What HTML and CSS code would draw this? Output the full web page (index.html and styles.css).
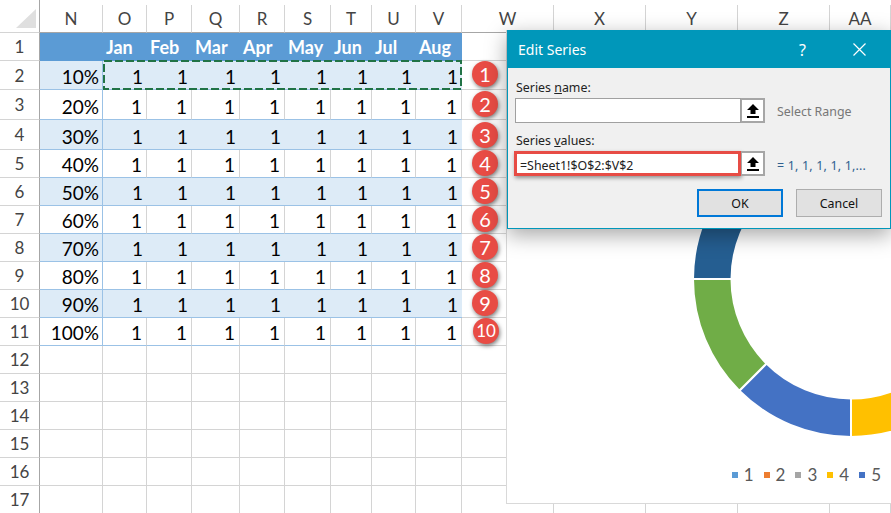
FILE: index.html
```html
<!DOCTYPE html>
<html lang="en">
<head>
    <meta charset="UTF-8">
    <title>Edit Series</title>
    <link rel="stylesheet" href="styles.css">
</head>
<body>

    <div class="sheet">
        <!-- column letters -->
        <div class="corner"><svg width="40" height="32"><polygon points="16,28 36,28 36,9" fill="#dfdfdf"/></svg></div>
        <div class="col-head">N</div><div class="col-head">O</div><div class="col-head">P</div><div class="col-head">Q</div><div class="col-head">R</div><div class="col-head">S</div><div class="col-head">T</div><div class="col-head">U</div><div class="col-head">V</div><div class="col-head">W</div><div class="col-head">X</div><div class="col-head">Y</div><div class="col-head">Z</div><div class="col-head">AA</div>

        <div class="row-head">1</div>
        <div class="hdr hdr-n"></div><div class="hdr">Jan</div><div class="hdr">Feb</div><div class="hdr">Mar</div><div class="hdr">Apr</div><div class="hdr">May</div><div class="hdr">Jun</div><div class="hdr">Jul</div><div class="hdr">Aug</div>
        <div class="rest"></div>

        <div class="row-head">2</div>
        <div class="band pct">10%</div><div class="band">1</div><div class="band">1</div><div class="band">1</div><div class="band">1</div><div class="band">1</div><div class="band">1</div><div class="band">1</div><div class="band">1</div>
        <div class="rest"></div>

        <div class="row-head">3</div>
        <div class="cell pct">20%</div><div class="cell">1</div><div class="cell">1</div><div class="cell">1</div><div class="cell">1</div><div class="cell">1</div><div class="cell">1</div><div class="cell">1</div><div class="cell">1</div>
        <div class="rest"></div>

        <div class="row-head">4</div>
        <div class="band pct">30%</div><div class="band">1</div><div class="band">1</div><div class="band">1</div><div class="band">1</div><div class="band">1</div><div class="band">1</div><div class="band">1</div><div class="band">1</div>
        <div class="rest"></div>

        <div class="row-head">5</div>
        <div class="cell pct">40%</div><div class="cell">1</div><div class="cell">1</div><div class="cell">1</div><div class="cell">1</div><div class="cell">1</div><div class="cell">1</div><div class="cell">1</div><div class="cell">1</div>
        <div class="rest"></div>

        <div class="row-head">6</div>
        <div class="band pct">50%</div><div class="band">1</div><div class="band">1</div><div class="band">1</div><div class="band">1</div><div class="band">1</div><div class="band">1</div><div class="band">1</div><div class="band">1</div>
        <div class="rest"></div>

        <div class="row-head">7</div>
        <div class="cell pct">60%</div><div class="cell">1</div><div class="cell">1</div><div class="cell">1</div><div class="cell">1</div><div class="cell">1</div><div class="cell">1</div><div class="cell">1</div><div class="cell">1</div>
        <div class="rest"></div>

        <div class="row-head">8</div>
        <div class="band pct">70%</div><div class="band">1</div><div class="band">1</div><div class="band">1</div><div class="band">1</div><div class="band">1</div><div class="band">1</div><div class="band">1</div><div class="band">1</div>
        <div class="rest"></div>

        <div class="row-head">9</div>
        <div class="cell pct">80%</div><div class="cell">1</div><div class="cell">1</div><div class="cell">1</div><div class="cell">1</div><div class="cell">1</div><div class="cell">1</div><div class="cell">1</div><div class="cell">1</div>
        <div class="rest"></div>

        <div class="row-head">10</div>
        <div class="band pct">90%</div><div class="band">1</div><div class="band">1</div><div class="band">1</div><div class="band">1</div><div class="band">1</div><div class="band">1</div><div class="band">1</div><div class="band">1</div>
        <div class="rest"></div>

        <div class="row-head">11</div>
        <div class="cell pct">100%</div><div class="cell">1</div><div class="cell">1</div><div class="cell">1</div><div class="cell">1</div><div class="cell">1</div><div class="cell">1</div><div class="cell">1</div><div class="cell">1</div>
        <div class="rest"></div>

        <div class="row-head">12</div>
        <div class="empty"></div><div class="empty"></div><div class="empty"></div><div class="empty"></div><div class="empty"></div><div class="empty"></div><div class="empty"></div><div class="empty"></div><div class="empty"></div>
        <div class="rest"></div>

        <div class="row-head">13</div>
        <div class="empty"></div><div class="empty"></div><div class="empty"></div><div class="empty"></div><div class="empty"></div><div class="empty"></div><div class="empty"></div><div class="empty"></div><div class="empty"></div>
        <div class="rest"></div>

        <div class="row-head">14</div>
        <div class="empty"></div><div class="empty"></div><div class="empty"></div><div class="empty"></div><div class="empty"></div><div class="empty"></div><div class="empty"></div><div class="empty"></div><div class="empty"></div>
        <div class="rest"></div>

        <div class="row-head">15</div>
        <div class="empty"></div><div class="empty"></div><div class="empty"></div><div class="empty"></div><div class="empty"></div><div class="empty"></div><div class="empty"></div><div class="empty"></div><div class="empty"></div>
        <div class="rest"></div>

        <div class="row-head">16</div>
        <div class="empty"></div><div class="empty"></div><div class="empty"></div><div class="empty"></div><div class="empty"></div><div class="empty"></div><div class="empty"></div><div class="empty"></div><div class="empty"></div>
        <div class="rest"></div>

        <div class="row-head">17</div>
        <div class="empty"></div><div class="empty"></div><div class="empty"></div><div class="empty"></div><div class="empty"></div><div class="empty"></div><div class="empty"></div><div class="empty"></div><div class="empty"></div><div class="empty"></div><div class="empty"></div><div class="empty"></div><div class="empty"></div><div class="empty"></div>

        <!-- copied range -->
        <svg class="marching-ants" width="359" height="30"><rect x="1" y="1" width="357" height="28" fill="none" stroke="#217346" stroke-width="2" stroke-dasharray="8 3"/></svg>
    </div>

    <!-- numbered callouts beside the table -->
    <div class="badge badge-1">1</div>
    <div class="badge badge-2">2</div>
    <div class="badge badge-3">3</div>
    <div class="badge badge-4">4</div>
    <div class="badge badge-5">5</div>
    <div class="badge badge-6">6</div>
    <div class="badge badge-7">7</div>
    <div class="badge badge-8">8</div>
    <div class="badge badge-9">9</div>
    <div class="badge badge-10">10</div>

    <!-- doughnut chart, mostly under the dialog -->
    <div class="chart">
        <svg class="donut" width="384" height="434">
            <path d="M455.72 360.72 A158 158 0 0 1 344 407 L344 368.5 A119.5 119.5 0 0 0 428.5 333.5 Z" fill="#ffc000" stroke="#fff" stroke-width="2"/>
            <path d="M344 407 A158 158 0 0 1 232.28 360.72 L259.5 333.5 A119.5 119.5 0 0 0 344 368.5 Z" fill="#4472c4" stroke="#fff" stroke-width="2"/>
            <path d="M232.28 360.72 A158 158 0 0 1 186 249 L224.5 249 A119.5 119.5 0 0 0 259.5 333.5 Z" fill="#70ad47" stroke="#fff" stroke-width="2"/>
            <path d="M186 249 A158 158 0 0 1 232.28 137.28 L259.5 164.5 A119.5 119.5 0 0 0 224.5 249 Z" fill="#255e91" stroke="#fff" stroke-width="2"/>
        </svg>
        <div class="legend">
            <span class="legend-item"><i class="swatch swatch-1"></i>1</span>
            <span class="legend-item"><i class="swatch swatch-2"></i>2</span>
            <span class="legend-item"><i class="swatch swatch-3"></i>3</span>
            <span class="legend-item"><i class="swatch swatch-4"></i>4</span>
            <span class="legend-item"><i class="swatch swatch-5"></i>5</span>
        </div>
    </div>

    <div class="dialog">
        <div class="title-bar">
            <span class="title">Edit Series</span>
            <span class="help">?</span>
            <svg class="close" width="13" height="13"><path d="M0.5 0.5 L12.5 12.5 M12.5 0.5 L0.5 12.5" stroke="#fff" stroke-width="1.2" fill="none"/></svg>
        </div>
        <div class="dialog-body">
            <div class="field-label">Series <u>n</u>ame:</div>
            <div class="field-row">
                <div class="text-box"></div>
                <div class="range-btn"><svg width="12" height="14"><path d="M6 0 L12 6 L8.5 6 L8.5 10 L3.5 10 L3.5 6 L0 6 Z M0 12 H12 V14 H0 Z" fill="#000"/></svg></div>
                <span class="hint">Select Range</span>
            </div>
            <div class="field-label label-values">Series <u>v</u>alues:</div>
            <div class="field-row">
                <div class="text-box text-box-active">=Sheet1!$O$2:$V$2</div>
                <div class="range-btn"><svg width="12" height="14"><path d="M6 0 L12 6 L8.5 6 L8.5 10 L3.5 10 L3.5 6 L0 6 Z M0 12 H12 V14 H0 Z" fill="#000"/></svg></div>
                <span class="preview">= 1, 1, 1, 1, 1,...</span>
            </div>
            <div class="actions">
                <button class="btn btn-default">OK</button>
                <button class="btn">Cancel</button>
            </div>
        </div>
    </div>

</body>
</html>
```

FILE: styles.css
```css
html, body {
    margin: 0;
    height: 513px;
    overflow: hidden;
    background-color: white;
}

body {
    position: relative;
    font-family: Lato, "Liberation Sans", sans-serif;
}

.sheet {
    position: relative;
    display: grid;
    grid-template-columns: 40px 63px 44px 45px 48px 45px 46px 41px 44px 46px 92px 92px 92px 92px 61px;
    grid-template-rows: 33px 28px 29px 30px 30px repeat(13, 28px);
    height: 513px;
    overflow: hidden;
    font-size: 19px;
    color: #000;
}

.corner {
    border-bottom: 1px solid #d4d4d4;
    border-right: 1px solid #a6a6a6;
    box-sizing: border-box;
}

.col-head {
    margin-top: 5px;
    border-right: 1px solid #d4d4d4;
    border-bottom: 1px solid #a6a6a6;
    color: #444;
    font-size: 17px;
    display: flex;
    align-items: center;
    justify-content: center;
}

.row-head {
    border-right: 1px solid #a6a6a6;
    border-bottom: 1px solid #d4d4d4;
    color: #444;
    font-size: 17px;
    display: flex;
    align-items: center;
    justify-content: center;
}

.hdr {
    background-color: #5b9bd5;
    color: white;
    font-weight: bold;
    font-size: 18px;
    padding-left: 3px;
    display: flex;
    align-items: center;
    white-space: nowrap;
    overflow: hidden;
}

.cell, .band {
    display: flex;
    align-items: flex-end;
    justify-content: flex-end;
    padding: 0 4px 1px 0;
    border-bottom: 1px solid #9bc2e6;
}

.cell {
    border-right: 1px solid #d4d4d4;
}

.band {
    background-color: #ddebf7;
}

.band.pct, .cell.pct {
    border-right: 1px solid #9bc2e6;
    padding-right: 3px;
}

.rest {
    grid-column: span 5;
    border-bottom: 1px solid #d4d4d4;
}

.empty {
    border-right: 1px solid #d4d4d4;
    border-bottom: 1px solid #d4d4d4;
}

.marching-ants {
    position: absolute;
    grid-column: 3 / 11;
    grid-row: 3 / 4;
    top: -1px;
    left: 0;
}

/* callouts */
.badge {
    position: absolute;
    left: 472px;
    width: 26px;
    height: 26px;
    border-radius: 50%;
    background-color: #e84c45;
    color: white;
    font-size: 20px;
    line-height: 26px;
    text-align: center;
    box-shadow: 1px 2px 4px rgba(0, 0, 0, 0.5);
}

.badge-1 { top: 61px; }
.badge-2 { top: 91px; }
.badge-3 { top: 122px; }
.badge-4 { top: 150px; }
.badge-5 { top: 178px; }
.badge-6 { top: 206px; }
.badge-7 { top: 234px; }
.badge-8 { top: 262px; }
.badge-9 { top: 290px; }
.badge-10 { top: 318px; left: 473px; font-size: 17px; }

/* chart */
.chart {
    position: absolute;
    left: 506px;
    top: 30px;
    width: 385px;
    height: 474px;
    box-sizing: border-box;
    background-color: white;
    border-left: 1px solid #d9d9d9;
    border-bottom: 1px solid #d9d9d9;
}

.donut {
    display: block;
}

.legend {
    display: flex;
    justify-content: flex-end;
    gap: 10px;
    padding-right: 10px;
    font-size: 17px;
    color: #595959;
}

.legend-item {
    display: flex;
    align-items: center;
    gap: 6px;
}

.swatch {
    width: 6px;
    height: 6px;
}

.swatch-1 { background-color: #5b9bd5; }
.swatch-2 { background-color: #ed7d31; }
.swatch-3 { background-color: #a5a5a5; }
.swatch-4 { background-color: #ffc000; }
.swatch-5 { background-color: #4472c4; }

/* dialog */
.dialog {
    position: absolute;
    left: 507px;
    top: 30px;
    width: 384px;
    height: 199px;
    box-sizing: border-box;
    border: 1px solid #0097ba;
    background-color: #f0f0f0;
    box-shadow: 0 6px 20px rgba(0, 0, 0, 0.35);
    font-family: "Noto Sans", sans-serif;
    font-size: 12.4px;
    color: #222;
}

.title-bar {
    display: flex;
    align-items: center;
    height: 37px;
    padding-left: 10px;
    background-color: #0097ba;
    color: white;
}

.title {
    font-size: 14px;
    flex: 1;
}

.help {
    font-size: 16px;
    margin-right: 47px;
}

.close {
    margin-right: 24px;
}

.dialog-body {
    padding: 11px 8px 0 7px;
}

.field-label {
    height: 19px;
    line-height: 17px;
    padding-left: 1px;
}

.label-values {
    margin-top: 9px;
}

.field-row {
    display: flex;
    align-items: center;
    height: 25px;
}

.text-box {
    box-sizing: border-box;
    width: 226px;
    height: 25px;
    background-color: white;
    border: 1px solid #a0a0a0;
    padding-left: 4px;
    line-height: 23px;
}

.text-box-active {
    width: 227px;
    margin-left: -1px;
    border: 3px solid #e74c45;
    padding-left: 3px;
    line-height: 24px;
    box-shadow: 1px 2px 4px rgba(0, 0, 0, 0.4);
}

.range-btn {
    box-sizing: border-box;
    width: 24px;
    height: 25px;
    border: 2px solid #a6a6a6;
    border-left-width: 1px;
    background-color: white;
    display: flex;
    align-items: center;
    justify-content: center;
}

.hint {
    margin-left: 12px;
    padding-top: 2px;
    color: #777;
}

.preview {
    margin-left: 12px;
    padding-top: 3px;
    letter-spacing: 0.2px;
    color: #2f5f8f;
}

.actions {
    display: flex;
    justify-content: flex-end;
    gap: 13px;
    margin-top: 13px;
}

.btn {
    box-sizing: border-box;
    width: 86px;
    height: 28px;
    background-color: #e1e1e1;
    border: 1px solid #adadad;
    font-family: inherit;
    font-size: 12.4px;
    color: #111;
    padding: 0;
}

.btn-default {
    border: 2px solid #0078d7;
}
```
